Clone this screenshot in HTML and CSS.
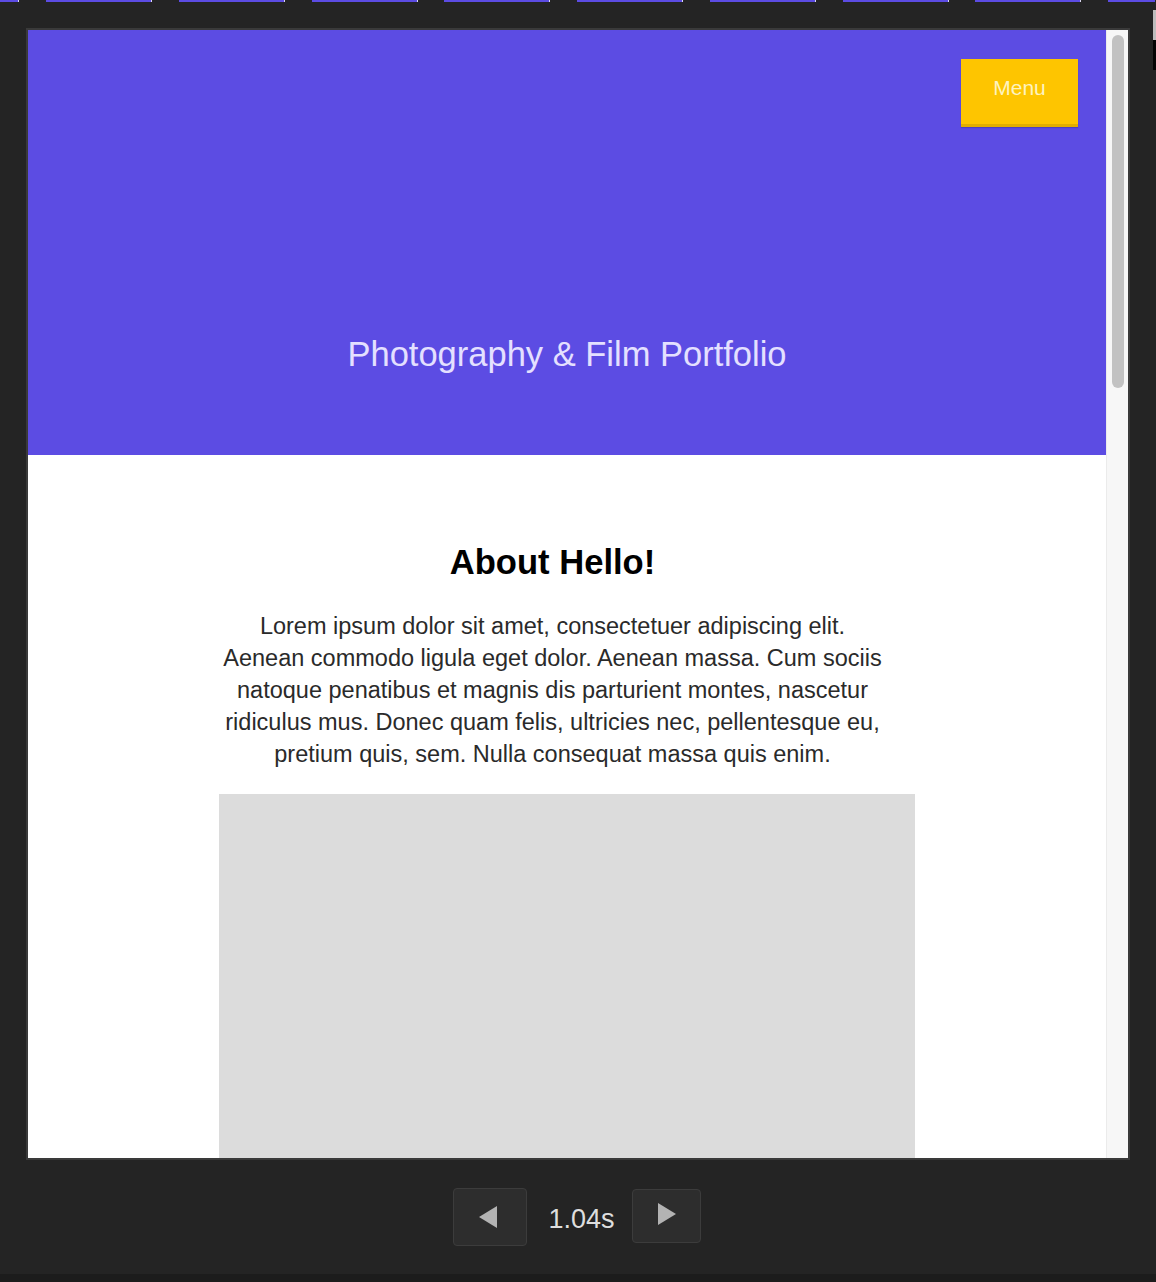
FILE: index.html
```html
<!DOCTYPE html>
<html lang="en">
<head>
<meta charset="utf-8">
<title>Photography &amp; Film Portfolio</title>
<link rel="stylesheet" href="styles.css">
</head>
<body>
<div class="filmstrip">
  <div class="thumb thumb-first"></div><div class="thumb"></div><div class="thumb"></div><div class="thumb"></div><div class="thumb"></div><div class="thumb"></div><div class="thumb"></div><div class="thumb"></div><div class="thumb"></div><div class="thumb thumb-last"></div>
</div>
<div class="edge">
  <span class="edge-light"></span><span class="edge-dark"></span>
</div>
<div class="frame">
  <div class="page">
    <header class="hero">
      <button class="menu-btn">Menu</button>
      <h1 class="hero-title">Photography &amp; Film Portfolio</h1>
    </header>
    <section class="about">
      <div class="about-inner">
        <div class="about-text">
          <h2 class="about-title">About Hello!</h2>
          <p class="about-copy">Lorem ipsum dolor sit amet, consectetuer adipiscing elit. Aenean commodo ligula eget dolor. Aenean massa. Cum sociis natoque penatibus et magnis dis parturient montes, nascetur ridiculus mus. Donec quam felis, ultricies nec, pellentesque eu, pretium quis, sem. Nulla consequat massa quis enim.</p>
        </div>
        <div class="placeholder"></div>
      </div>
    </section>
  </div>
  <div class="scrollbar"><div class="scroll-thumb"></div></div>
</div>
<div class="controls">
  <button class="ctrl ctrl-prev" aria-label="Previous">
    <svg width="20" height="24" viewBox="0 0 20 24"><path d="M19 1 L1 12 L19 23 Z" fill="#b3b3b3"/></svg>
  </button>
  <span class="time">1.04s</span>
  <button class="ctrl ctrl-next" aria-label="Next">
    <svg width="20" height="24" viewBox="0 0 20 24"><path d="M1 1 L19 12 L1 23 Z" fill="#b3b3b3"/></svg>
  </button>
</div>
<div class="footer-strip"></div>
</body>
</html>
```
FILE: styles.css
```css
* { box-sizing: border-box; }
html, body { margin: 0; padding: 0; }
body {
  background: #242424;
  width: 1156px;
  height: 1282px;
  overflow: hidden;
  font-family: "Liberation Sans", Arial, sans-serif;
  position: relative;
}
.filmstrip {
  display: flex;
  gap: 26.75px;
  height: 2px;
  width: 1156px;
  overflow: hidden;
}
.thumb {
  flex: 0 0 106px;
  height: 2px;
  background: #5c4ce3;
  border-right: 1px solid #d8d6f0;
}
.thumb-first { flex-basis: 19px; margin-right: 0.25px; }
.thumb-last { flex-basis: 47px; flex-shrink: 1; border-right: 0; }
.edge {
  position: absolute;
  right: 0;
  top: 10px;
  width: 3px;
  display: flex;
  flex-direction: column;
}
.edge-light { height: 30px; background: #bdbdbd; }
.edge-dark { height: 30px; background: #050505; }
.frame {
  margin: 26px 0 0 26px;
  width: 1104px;
  height: 1132px;
  border: 2px solid #3a3a3a;
  display: flex;
  overflow: hidden;
}
.page {
  width: 1078px;
  height: 1128px;
  background: #ffffff;
  overflow: hidden;
}
.hero {
  height: 425px;
  background: #5c4ce3;
  display: flex;
  flex-direction: column;
  align-items: center;
  padding: 29px 28px 0 28px;
}
.menu-btn {
  align-self: flex-end;
  width: 117px;
  height: 68px;
  border: 0;
  border-bottom: 3px solid #e2ae00;
  background: #fec500;
  color: #fdf3c0;
  font-family: "Liberation Sans", Arial, sans-serif;
  font-size: 21px;
  padding: 0 0 7px 0;
  margin: 0;
  box-shadow: 0 1px 1px rgba(0,0,0,0.15);
}
.hero-title {
  margin: 207px 0 0 0;
  font-size: 34.5px;
  font-weight: 400;
  line-height: 40px;
  color: #e4e0ff;
  letter-spacing: 0;
}
.about {
  padding-top: 88px;
}
.about-inner {
  width: 696px;
  margin: 0 auto;
}
.about-text {
  width: 667px;
  text-align: center;
}
.about-title {
  margin: 0;
  font-size: 34.6px;
  line-height: 39px;
  font-weight: 700;
  color: #000;
}
.about-copy {
  margin: 28px 0 0 0;
  font-size: 23.5px;
  line-height: 32px;
  color: #2a2a2a;
}
.placeholder {
  margin-top: 24px;
  height: 400px;
  background: #dcdcdc;
}
.scrollbar {
  width: 22px;
  height: 1128px;
  background: #f7f7f7;
  border-left: 1px solid #ebebeb;
  padding: 5px 4px 0 5px;
}
.scroll-thumb {
  width: 12px;
  height: 353px;
  border-radius: 6px;
  background: #c2c2c2;
}
.controls {
  height: 114px;
  display: flex;
  align-items: center;
  justify-content: center;
  padding-right: 2px;
}
.ctrl {
  background: #2d2d2d;
  border: 1px solid #3c3c3c;
  border-radius: 4px;
  display: flex;
  align-items: center;
  justify-content: center;
  padding: 0;
}
.ctrl-prev { width: 74px; height: 58px; padding-right: 4px; }
.ctrl-next { width: 69px; height: 54px; padding-left: 2px; margin-top: -2px; }
.ctrl-next svg { margin-top: -4px; }
.time {
  margin: 4px 17px 0 21px;
  color: #dedede;
  font-size: 27px;
  font-family: "Liberation Sans", Arial, sans-serif;
}
.footer-strip {
  height: 8px;
  background: #1c1c1c;
}
```
